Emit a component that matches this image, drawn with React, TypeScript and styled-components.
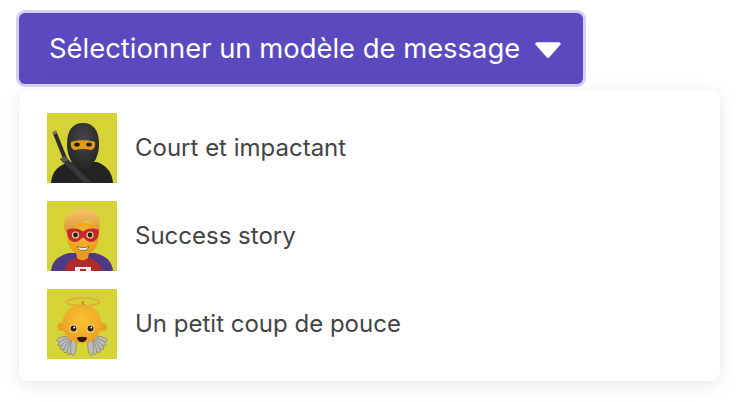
import styled, { createGlobalStyle } from "styled-components"

const GlobalStyle = createGlobalStyle`
    html, body {
        margin: 0;
        background: #ffffff;
    }
    body {
        font-family: "Inter", "Liberation Sans", sans-serif;
    }
`;

const NinjaArt = () => (
    <svg viewBox="0 0 70 70" width="70" height="70">
        <defs>
            <radialGradient id="hood" cx="50%" cy="35%" r="65%">
                <stop offset="0%" stopColor="#484848" />
                <stop offset="100%" stopColor="#242424" />
            </radialGradient>
        </defs>
        <path d="M5.5 19.5 L9 17.5 L20 45 L16.5 47 Z" fill="#2c2c2c" />
        <path d="M5.5 19.5 L9 17.5 L10 20 L6.6 22 Z" fill="#7a7a7a" />
        <path d="M4 70 C5 59 10 53 22 49 L50 49 C60 53 65 59 66 70 Z" fill="#232323" />
        <path d="M20 31 C20 17 26 10 36 10 C46 10 52 17 52 31 C52 44 46 55 36 56 C26 55 20 44 20 31 Z" fill="url(#hood)" />
        <path d="M24 29 C30 26.5 42 26.5 48 29 C48.5 33 47.5 36.5 44 37 C39 35.5 33 35.5 28 37 C24.5 36.5 23.5 33 24 29 Z" fill="#e09a1e" />
        <ellipse cx="30" cy="31.5" rx="2.8" ry="2" fill="#2a1c08" />
        <ellipse cx="42" cy="31.5" rx="2.8" ry="2" fill="#2a1c08" />
        <path d="M13 46 L18 43 L44 69 L37 70 Z" fill="#383838" />
        <path d="M13 46 L18 43 L21 47 L16 50 Z" fill="#565656" />
    </svg>
);

const HeroArt = () => (
    <svg viewBox="0 0 70 70" width="70" height="70">
        <defs>
            <linearGradient id="hair" x1="0" y1="0" x2="0" y2="1">
                <stop offset="0%" stopColor="#f4c46a" />
                <stop offset="100%" stopColor="#dd952e" />
            </linearGradient>
            <radialGradient id="heroSkin" cx="50%" cy="40%" r="60%">
                <stop offset="0%" stopColor="#f8bd30" />
                <stop offset="100%" stopColor="#e99a1e" />
            </radialGradient>
        </defs>
        <path d="M4 70 C5 60 11 55 22 52 L48 52 C59 55 65 60 66 70 Z" fill="#4f3a86" />
        <path d="M18 70 C18 64 22 59 28 57 L43 57 C49 59 54 64 55 70 Z" fill="#b02b2c" />
        <path d="M29 51 L42 51 L41 57 C38 60 33 60 30 57 Z" fill="#e59a20" />
        <path d="M28 66 L44 66 L44 70 L28 70 Z" fill="#f1eee8" />
        <path d="M33 68 L39 68 L39 70 L33 70 Z" fill="#b02b2c" />
        <path d="M21 27 C21 20 50 20 51 27 L51.5 37 C51.5 47 44 54 36 54 C28 54 20.5 47 20.5 37 Z" fill="url(#heroSkin)" />
        <path d="M18.5 31 C13 18 24 6 37 8 C48 7 56 16 52 30 C49 24 45 21 39 20 C33 23 25 24 22 32 L18.5 31 Z" fill="url(#hair)" />
        <path d="M20 29 C26 26.5 32 27.5 36 30.5 C40 27.5 46 26.5 52 29 C52.5 36 49 41 44 41 C40 41 38.5 38 36 36.5 C33.5 38 32 41 28 41 C23 41 19.5 36 20 29 Z" fill="#c4292f" />
        <circle cx="28.5" cy="34" r="3.6" fill="#ecd687" />
        <circle cx="43" cy="34" r="3.6" fill="#ecd687" />
        <circle cx="28.5" cy="34" r="2.4" fill="#2b2116" />
        <circle cx="43" cy="34" r="2.4" fill="#2b2116" />
        <path d="M30 45.5 C33 47 39 47 42 45.5 C41 48.5 38.5 49.5 36 49.5 C33.5 49.5 31 48.5 30 45.5 Z" fill="#f4f1e4" stroke="#5a3a10" strokeWidth="0.6" />
    </svg>
);

const feathers = [82, 66, 50, 34, 18, 4];

const Wing = ({ mirrored }: { mirrored?: boolean }) => (
    <g transform={mirrored ? "translate(70 0) scale(-1 1)" : undefined}>
        {feathers.map((angle) => (
            <ellipse
                key={angle}
                cx="27"
                cy="58"
                rx="2.8"
                ry="8.5"
                fill="#bdbdb8"
                stroke="#7f7f7a"
                strokeWidth="0.7"
                transform={`rotate(${angle} 27 49)`}
            />
        ))}
    </g>
);

const AngelArt = () => (
    <svg viewBox="0 0 70 70" width="70" height="70">
        <defs>
            <radialGradient id="angelSkin" cx="50%" cy="38%" r="62%">
                <stop offset="0%" stopColor="#f8c233" />
                <stop offset="100%" stopColor="#eda022" />
            </radialGradient>
        </defs>
        <Wing />
        <Wing mirrored />
        <circle cx="14.5" cy="38" r="4" fill="#e99f24" />
        <circle cx="56" cy="38" r="4" fill="#e99f24" />
        <circle cx="35" cy="35" r="19.5" fill="url(#angelSkin)" />
        <path d="M35 16 C33 13 36 11 38 12 C36 13 37 15 38 16 Z" fill="#dd9420" />
        <ellipse cx="36" cy="13" rx="16.5" ry="4" fill="none" stroke="#e5a93c" strokeWidth="1.6" />
        <circle cx="26.5" cy="39.5" r="4" fill="#f2dc9a" />
        <circle cx="43.5" cy="39.5" r="4" fill="#f2dc9a" />
        <circle cx="26.5" cy="39.5" r="3" fill="#2e2312" />
        <circle cx="43.5" cy="39.5" r="3" fill="#2e2312" />
        <circle cx="27.3" cy="38.5" r="0.9" fill="#ffffff" />
        <circle cx="44.3" cy="38.5" r="0.9" fill="#ffffff" />
        <path d="M30 48.5 C33 47.5 37 47.5 40 48.5 C39.5 52 37 53 35 53 C33 53 30.5 52 30 48.5 Z" fill="#2a1607" />
    </svg>
);

const templates = [
    { id: "court", label: "Court et impactant", art: <NinjaArt /> },
    { id: "success", label: "Success story", art: <HeroArt /> },
    { id: "pouce", label: "Un petit coup de pouce", art: <AngelArt /> },
];

export default function App() {
    return (
        <Page>
            <GlobalStyle />
            <SelectButton type="button">
                <span>Sélectionner un modèle de message</span>
                <Caret viewBox="0 0 26 16">
                    <path d="M1.8 1.8 H24.2 L13 14.4 Z" fill="#ffffff" stroke="#ffffff" strokeWidth="3" strokeLinejoin="round" />
                </Caret>
            </SelectButton>
            <Menu>
                {templates.map((template) => (
                    <MenuItem key={template.id}>
                        <Thumb>{template.art}</Thumb>
                        <ItemLabel>{template.label}</ItemLabel>
                    </MenuItem>
                ))}
            </Menu>
        </Page>
    );
}

const Page = styled.div`
    display: flex;
    flex-direction: column;
    align-items: flex-start;
    width: 740px;
    height: 402px;
    padding: 13px 20px 0 19px;
    box-sizing: border-box;
    overflow: hidden;
    background: #ffffff;
`;

const SelectButton = styled.button`
    display: flex;
    align-items: center;
    justify-content: space-between;
    width: 564px;
    height: 71px;
    padding: 0 22px 0 30px;
    box-sizing: border-box;
    border: none;
    border-radius: 6px;
    background: #5b49c0;
    box-shadow: 0 0 0 3px #d6d0f1;
    color: #ffffff;
    font-family: inherit;
    font-size: 27.4px;
    font-weight: 400;
    line-height: 1;
    white-space: nowrap;
`;

const Caret = styled.svg`
    width: 26px;
    height: 16px;
    flex: none;
    margin-top: 2px;
`;

const Menu = styled.ul`
    display: flex;
    flex-direction: column;
    gap: 18px;
    width: 701px;
    height: 291px;
    margin: 6px 0 0;
    padding: 23px 28px 0;
    box-sizing: border-box;
    list-style: none;
    border-radius: 8px;
    background: #ffffff;
    box-shadow: 0 4px 20px rgba(0, 0, 0, 0.09), 0 0 2px rgba(0, 0, 0, 0.05);
`;

const MenuItem = styled.li`
    display: flex;
    align-items: center;
    gap: 18px;
    height: 70px;
`;

const Thumb = styled.div`
    width: 70px;
    height: 70px;
    flex: none;
    background: #d5d336;
    > svg {
        display: block;
    }
`;

const ItemLabel = styled.span`
    margin-top: -2px;
    color: #444444;
    font-size: 24px;
    font-weight: 400;
`;
